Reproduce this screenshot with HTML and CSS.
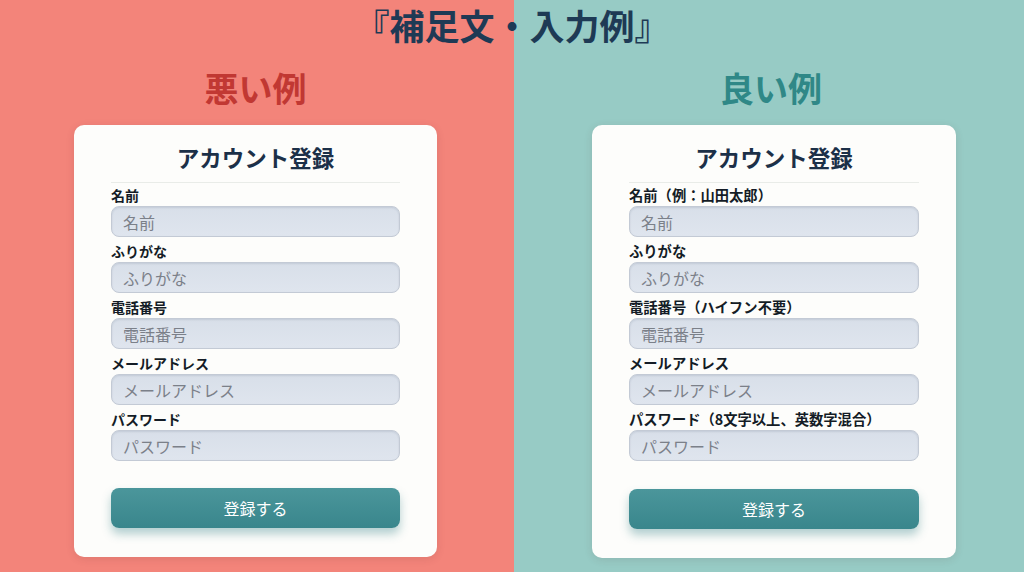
FILE: index.html
```html
<!DOCTYPE html>
<html lang="ja">
<head>
    <meta charset="UTF-8">
    <meta name="viewport" content="width=device-width, initial-scale=1.0">
    <title>補足文・入力例</title>
    <link rel="stylesheet" href="styles.css">
</head>
<body>
    <h1 class="page-title">『補足文・入力例』</h1>
    <div class="compare">
        <section class="side bad">
            <h2 class="side-title">悪い例</h2>
            <form class="card">
                <h3>アカウント登録</h3>
                <label>名前</label>
                <input type="text" placeholder="名前">
                <label>ふりがな</label>
                <input type="text" placeholder="ふりがな">
                <label>電話番号</label>
                <input type="text" placeholder="電話番号">
                <label>メールアドレス</label>
                <input type="text" placeholder="メールアドレス">
                <label>パスワード</label>
                <input type="password" placeholder="パスワード">
                <button type="button" class="submit-btn">登録する</button>
            </form>
        </section>
        <section class="side good">
            <h2 class="side-title">良い例</h2>
            <form class="card">
                <h3>アカウント登録</h3>
                <label>名前（例：山田太郎）</label>
                <input type="text" placeholder="名前">
                <label>ふりがな</label>
                <input type="text" placeholder="ふりがな">
                <label>電話番号（ハイフン不要）</label>
                <input type="text" placeholder="電話番号">
                <label>メールアドレス</label>
                <input type="text" placeholder="メールアドレス">
                <label>パスワード（8文字以上、英数字混合）</label>
                <input type="password" placeholder="パスワード">
                <button type="button" class="submit-btn">登録する</button>
            </form>
        </section>
    </div>
</body>
</html>
```

FILE: styles.css
```css
body {
    margin: 0;
    padding: 0;
    width: 1024px;
    height: 572px;
    overflow: hidden;
    font-family: "Noto Sans CJK JP", "Noto Sans", sans-serif;
    background: linear-gradient(90deg, #f3847a 0, #f3847a 514px, #97cbc5 514px, #97cbc5 100%);
}

.page-title {
    margin: 0;
    padding-top: 5px;
    height: 40px;
    line-height: 40px;
    font-size: 35px;
    font-weight: 700;
    text-align: center;
    color: #1e3a55;
}

.compare {
    display: grid;
    grid-template-columns: 363px 364px;
    column-gap: 155px;
    padding-left: 74px;
    margin-top: 23px;
}

.side-title {
    margin: 0 0 17px;
    height: 40px;
    line-height: 40px;
    font-size: 34px;
    font-weight: 700;
    text-align: center;
}

.bad .side-title {
    color: #c13833;
}

.good .side-title {
    color: #2f8887;
    padding-right: 6px;
}

.card {
    display: flex;
    flex-direction: column;
    padding: 18px 37px 29px;
    background: #fdfdfb;
    border-radius: 10px;
    box-shadow: 0 2px 8px rgba(80, 40, 40, 0.12);
}

.card h3 {
    margin: 0 0 3px;
    height: 39px;
    line-height: 28px;
    font-size: 22.5px;
    font-weight: 700;
    text-align: center;
    color: #1c3048;
    border-bottom: 1px solid #e9ece8;
}

.card label {
    display: block;
    height: 18px;
    line-height: 18px;
    font-size: 14px;
    font-weight: 700;
    color: #141c26;
    margin-top: 5px;
}

.card h3 + label {
    margin-top: 0;
}

.good .card label {
    font-size: 14.3px;
}

.card input {
    box-sizing: border-box;
    height: 31px;
    margin-top: 2px;
    padding: 0 11px;
    font-family: inherit;
    font-size: 16px;
    color: #333;
    background: linear-gradient(180deg, #d8dfe9, #dfe5ee);
    border: 1px solid #c3cad5;
    border-radius: 8px;
    box-shadow: inset 0 1px 2px rgba(40, 60, 90, 0.12);
    outline: none;
}

.card input::placeholder {
    color: #7b8089;
}

.submit-btn {
    margin-top: 27px;
    height: 40px;
    border: none;
    border-radius: 8px;
    font-family: inherit;
    font-size: 16px;
    color: #ffffff;
    background: linear-gradient(180deg, #4b969b, #39868c);
    box-shadow: 0 6px 10px rgba(40, 120, 125, 0.35);
    cursor: pointer;
}

.good .submit-btn {
    margin-top: 28px;
}
```
